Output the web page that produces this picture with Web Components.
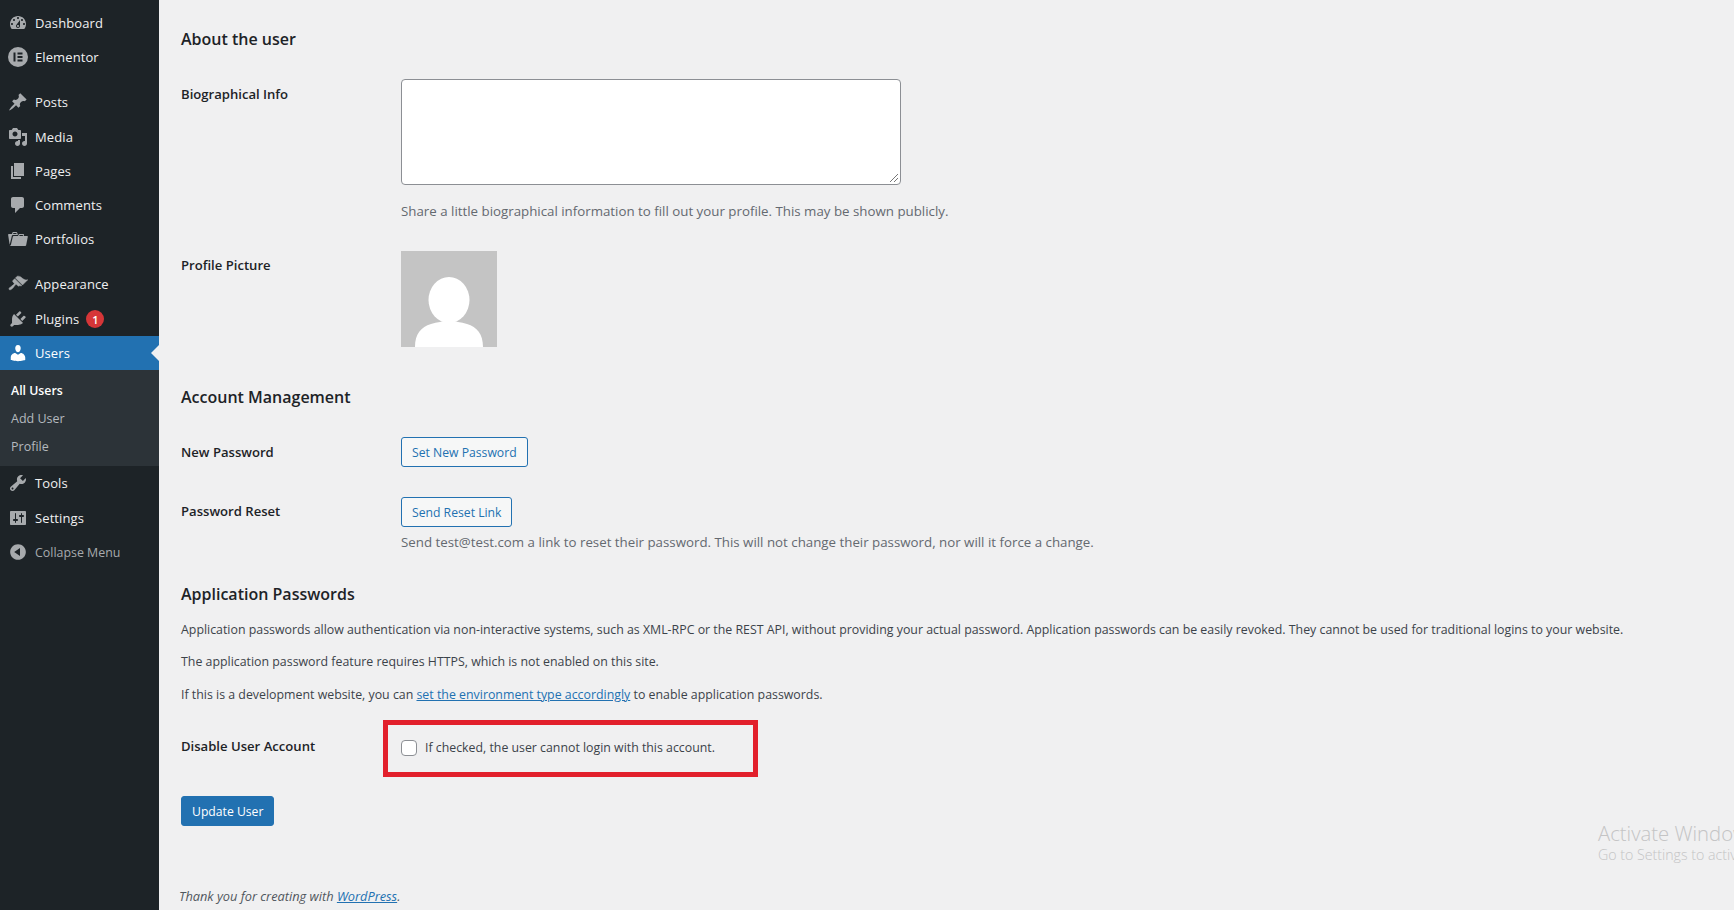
<!DOCTYPE html>
<html lang="en">
<head>
<meta charset="utf-8">
<title>Edit User</title>
<style>
html,body{margin:0;height:100%;overflow:hidden;background:#f0f0f1}
body{display:flex;font-family:"Open Sans","Noto Sans","Liberation Sans",sans-serif;font-size:13px;color:#3c434a}
</style>
</head>
<body>
<wp-sidebar>
  <wp-menu-item icon="dashboard">Dashboard</wp-menu-item>
  <wp-menu-item icon="elementor">Elementor</wp-menu-item>
  <wp-menu-gap></wp-menu-gap>
  <wp-menu-item icon="post">Posts</wp-menu-item>
  <wp-menu-item icon="media" style="margin-top:1px">Media</wp-menu-item>
  <wp-menu-item icon="page">Pages</wp-menu-item>
  <wp-menu-item icon="comments">Comments</wp-menu-item>
  <wp-menu-item icon="portfolio">Portfolios</wp-menu-item>
  <wp-menu-gap></wp-menu-gap>
  <wp-menu-item icon="appearance">Appearance</wp-menu-item>
  <wp-menu-item icon="plugins" badge="1" style="margin-top:1px">Plugins</wp-menu-item>
  <wp-menu-item icon="users" active>Users</wp-menu-item>
  <wp-submenu>
    <wp-sub-item current>All Users</wp-sub-item>
    <wp-sub-item>Add User</wp-sub-item>
    <wp-sub-item>Profile</wp-sub-item>
  </wp-submenu>
  <wp-menu-item icon="tools">Tools</wp-menu-item>
  <wp-menu-item icon="settings" style="margin-top:1px">Settings</wp-menu-item>
  <wp-menu-item icon="collapse" muted>Collapse Menu</wp-menu-item>
</wp-sidebar>
<wp-main></wp-main>

<script>
const ICONS = {
  dashboard:'M3.76 16h12.48c1.1-1.37 1.76-3.11 1.76-5 0-4.42-3.58-8-8-8s-8 3.58-8 8c0 1.89.66 3.63 1.76 5zM10 4c.55 0 1 .45 1 1s-.45 1-1 1-1-.45-1-1 .45-1 1-1zM6 6c.55 0 1 .45 1 1s-.45 1-1 1-1-.45-1-1 .45-1 1-1zm8 0c.55 0 1 .45 1 1s-.45 1-1 1-1-.45-1-1 .45-1 1-1zm-5.37 5.55L12 7v6c0 1.1-.9 2-2 2s-2-.9-2-2c0-.57.24-1.08.63-1.45zM4 10c.55 0 1 .45 1 1s-.45 1-1 1-1-.45-1-1 .45-1 1-1zm12 0c.55 0 1 .45 1 1s-.45 1-1 1-1-.45-1-1 .45-1 1-1zm-5 3c0-.55-.45-1-1-1s-1 .45-1 1 .45 1 1 1 1-.45 1-1z',
  elementor:'M10 0a10 10 0 1 0 0 20a10 10 0 0 0 0-20zM5.5 5.5h2v9h-2zM9.5 5.5h5v1.9h-5zM9.5 9h5v1.9h-5zM9.5 12.6h5v1.9h-5z',
  post:'M10.44 3.02l1.82-1.82 6.36 6.35-1.83 1.82c-1.05-.68-2.48-.57-3.41.36l-.75.75c-.92.93-1.04 2.35-.35 3.41l-1.83 1.82-2.41-2.41-2.8 2.79c-.42.42-3.38 2.71-3.8 2.29s1.86-3.39 2.28-3.81l2.79-2.79L4.1 9.36l1.83-1.82c1.05.69 2.48.57 3.4-.36l.75-.75c.93-.92 1.05-2.35.36-3.41z',
  media:'M13 11V4c0-.55-.45-1-1-1h-1.67L9 1H5L3.67 3H2c-.55 0-1 .45-1 1v7c0 .55.45 1 1 1h10c.55 0 1-.45 1-1zM7 4.5c1.38 0 2.5 1.12 2.5 2.5S8.38 9.5 7 9.5 4.5 8.38 4.5 7 5.62 4.5 7 4.5zM14 6h5v10.5c0 1.38-1.12 2.5-2.5 2.5S14 17.88 14 16.5s1.12-2.5 2.5-2.5c.17 0 .34.02.5.05V9h-3V6zm-4 8.05V13h2v3.5c0 1.38-1.12 2.5-2.5 2.5S7 17.88 7 16.5 8.12 14 9.5 14c.17 0 .34.02.5.05z',
  page:'M6 15V2h10v13H6zm-1 1h8v2H3V5h2v11z',
  comments:'M5 2h9c1.1 0 2 .9 2 2v7c0 1.1-.9 2-2 2h-2l-5 5v-5H5c-1.1 0-2-.9-2-2V4c0-1.1.9-2 2-2z',
  portfolio:'M4 5H.78c-.37 0-.74.32-.69.84l1.56 9.99S3.5 8.47 3.86 6.7c.11-.53.61-.7.98-.7H10s-.7-2.08-.77-2.31C9.11 3.25 8.89 3 8.45 3H5.14c-.36 0-.7.23-.8.64C4.26 3.95 4 5 4 5zm4.88 0h-4s.42-1 .87-1h2.13c.48 0 1 1 1 1zM2.67 16.25c-.31.47-.76.75-1.26.75h15.73c.54 0 .92-.31 1.03-.83.44-2.19 1.68-8.44 1.68-8.44.07-.5-.3-.73-.62-.73H16V5.53c0-.16-.26-.53-.66-.53h-3.76c-.52 0-.87.58-.87.58L10 7H5.59c-.32 0-.63.19-.69.5 0 0-1.59 6.7-1.72 7.33-.07.37-.22.99-.51 1.42zM15.38 7H11s.58-1 1.13-1h2.29c.71 0 .96 1 .96 1z',
  appearance:'M14.48 11.06L7.41 3.99l1.5-1.5c.5-.56 2.3-.47 3.51.32 1.21.8 1.43 1.28 2.91 2.1 1.18.64 2.45 1.26 4.45.85zm-.71.71L6.7 4.7 4.93 6.47c-.39.39-.39 1.02 0 1.41l1.06 1.06c.39.39.39 1.03 0 1.42-.6.6-1.43 1.11-2.21 1.69-.35.26-.7.53-1.01.84C1.43 13.23.4 14.77 1.2 15.58s2.35-.22 3.69-1.57c.3-.3.58-.66.84-1.01.58-.78 1.09-1.61 1.69-2.21.39-.39 1.02-.39 1.41 0l1.06 1.06c.39.39 1.02.39 1.41 0z',
  plugins:'M13.11 4.36L9.87 7.6 8 5.73l3.24-3.24c.35-.34 1.05-.2 1.56.32.52.51.66 1.21.31 1.55zm-8 1.77l.91-1.12 9.01 9.01-1.19.84c-.71.71-2.63 1.16-3.82 1.16H6.14L4.9 17.26c-.59.59-1.54.59-2.12 0-.59-.58-.59-1.53 0-2.12l1.24-1.24v-3.88c0-1.13.4-3.19 1.09-3.89zm7.26 3.97l3.24-3.24c.34-.35 1.04-.21 1.55.31.52.51.66 1.21.31 1.55l-3.24 3.25z',
  users:'M10 9.25c-2.27 0-2.73-3.44-2.73-3.44C7 4.02 7.82 2 9.97 2c2.16 0 2.98 2.02 2.71 3.81 0 0-.41 3.44-2.68 3.44zm0 2.57L12.72 10c2.39 0 4.52 2.33 4.52 4.53v2.49s-3.65 1.13-7.24 1.13c-3.65 0-7.24-1.13-7.24-1.13v-2.49c0-2.25 1.94-4.53 4.47-4.53z',
  tools:'M16.68 9.77c-1.34 1.34-3.3 1.67-4.95.99l-5.41 6.52c-.99.99-2.59.99-3.58 0s-.99-2.59 0-3.57l6.52-5.42c-.68-1.65-.35-3.61.99-4.95 1.28-1.28 3.12-1.62 4.72-1.06l-2.89 2.89 2.82 2.82 2.86-2.87c.53 1.58.18 3.39-1.08 4.67zM3.81 16.21c.4.39 1.04.39 1.43 0 .4-.4.4-1.04 0-1.43-.39-.4-1.03-.4-1.43 0-.39.39-.39 1.03 0 1.43z',
  settings:'M18 16V4c0-.55-.45-1-1-1H3c-.55 0-1 .45-1 1v12c0 .55.45 1 1 1h14c.55 0 1-.45 1-1zM8 11h1c.55 0 1 .45 1 1s-.45 1-1 1H8v1.5c0 .28-.22.5-.5.5s-.5-.22-.5-.5V13H6c-.55 0-1-.45-1-1s.45-1 1-1h1V5.5c0-.28.22-.5.5-.5s.5.22.5.5V11zm5-2h-1c-.55 0-1-.45-1-1s.45-1 1-1h1V5.5c0-.28.22-.5.5-.5s.5.22.5.5V7h1c.55 0 1 .45 1 1s-.45 1-1 1h-1v5.5c0 .28-.22.5-.5.5s-.5-.22-.5-.5V9z',
  collapse:'M10 2.16c4.33 0 7.84 3.51 7.84 7.84s-3.51 7.84-7.84 7.84S2.16 14.33 2.16 10 5.71 2.16 10 2.16zm2 11.72V6.12L6.18 9.97z'
};

function def(name, css, html){
  customElements.define(name, class extends HTMLElement{
    constructor(){
      super();
      this.attachShadow({mode:'open'});
    }
    connectedCallback(){
      if(!this.shadowRoot.innerHTML)
        this.shadowRoot.innerHTML = `<style>${css}</style>${typeof html==='function'?html(this):html}`;
    }
  });
}

def('wp-sidebar',
  `:host{display:flex;flex-direction:column;box-sizing:border-box;flex:none;width:159px;height:100vh;padding-top:6px;background:#1d2327;color:#f0f0f1}`,
  `<slot></slot>`);

def('wp-menu-gap', `:host{display:block;height:11px}`, `<span></span>`);

def('wp-menu-item',
  `:host{display:flex;position:relative;flex:none;align-items:center;height:34px;color:#f0f0f1;font-size:13px;letter-spacing:.1px}
   :host([active]){background:#2271b1;color:#fff}
   :host([muted]){color:#a7aaad;font-size:12.4px;letter-spacing:0}
   svg{flex:none;width:20px;height:20px;margin:0 7px 0 8px;fill:#a7aaad}
   :host([icon=appearance]) svg{stroke:#a7aaad;stroke-width:.5}
   :host([active]) svg{fill:#fff}
   .badge{display:flex;align-items:center;justify-content:center;width:18px;height:18px;margin-left:7px;border-radius:50%;background:#d63638;color:#fff;font-size:11px;font-weight:600;letter-spacing:0}
   .arrow{position:absolute;right:0;top:9px;border:8px solid transparent;border-right-color:#f0f0f1;border-left-width:0}`,
  el=>{
    const ic=el.getAttribute('icon');
    const b=el.getAttribute('badge');
    return `<svg viewBox="0 0 20 20" aria-hidden="true"><path fill-rule="evenodd" d="${ICONS[ic]}"/></svg><slot></slot>`+
      (b?`<span class="badge">${b}</span>`:'')+
      (el.hasAttribute('active')?`<span class="arrow"></span>`:'');
  });

def('wp-submenu',
  `:host{display:flex;flex-direction:column;flex:none;box-sizing:border-box;height:96px;padding:6px 0;background:#2c3338}`,
  `<slot></slot>`);

def('wp-sub-item',
  `:host{display:flex;align-items:center;height:28px;padding-left:11px;font-size:12.5px;color:#b4b9be}
   :host([current]){color:#fff;font-weight:600;font-size:12.3px}`,
  `<slot></slot>`);

def('wp-heading',
  `:host{display:block;height:22px;line-height:22px;font-size:16px;font-weight:600;color:#1d2327}`,
  `<slot></slot>`);

def('wp-row',
  `:host{display:grid;grid-template-columns:220px 1fr;align-items:start}
   .label{font-size:13.1px;font-weight:600;line-height:20px;color:#1d2327}`,
  `<div class="label" part="label"><slot name="label"></slot></div><div><slot></slot></div>`);

def('wp-desc',
  `:host{display:block;line-height:20px;font-size:13.3px;color:#646970}`,
  `<slot></slot>`);

def('wp-para',
  `:host{display:block;line-height:20px;font-size:12.36px;color:#3c434a}`,
  `<slot></slot>`);

def('wp-button',
  `:host{display:inline-flex;align-items:center;box-sizing:border-box;height:30px;padding:0 10px;border:1px solid #2271b1;border-radius:3px;background:#f6f7f7;color:#2271b1;font-size:12.2px}
   :host([primary]){background:#2271b1;color:#fff}`,
  `<slot></slot>`);

def('wp-avatar',
  `:host{display:block;width:96px;height:96px}
   svg{display:block}`,
  `<svg width="96" height="96" viewBox="0 0 96 96" role="img" aria-label="Profile picture"><rect width="96" height="96" fill="#c4c4c4"/><ellipse cx="48" cy="49" rx="20.5" ry="23" fill="#fff"/><path d="M14 96c0-13 6-20 16-23 6-2 12-2 18-5 6 3 12 3 18 5 10 3 16 10 16 23z" fill="#fff"/></svg>`);

def('wp-checkbox',
  `:host{display:inline-flex;align-items:center;font-size:12.34px;color:#3c434a}
   i{display:block;box-sizing:border-box;width:16px;height:16px;margin-right:8px;border:1px solid #8c8f94;border-radius:4px;background:#fff}`,
  `<i role="checkbox" aria-checked="false"></i><slot></slot>`);

def('wp-highlight',
  `:host{position:absolute;box-sizing:border-box;left:-18px;top:1px;width:375px;height:57px;border:5px solid #e2202c;pointer-events:none}`,
  `<span></span>`);

def('wp-watermark',
  `:host{position:absolute;left:1598px;top:820px;white-space:nowrap;color:#c4c4c5;font-weight:300}
   .big{font-size:20.3px;line-height:26px}
   .small{font-size:14.2px;line-height:18px}`,
  `<div class="big">Activate Windows</div><div class="small">Go to Settings to activate Windows.</div>`);

def('wp-main',
  `:host{display:block;flex:1;min-width:0;box-sizing:border-box;height:100vh;padding:28px 0 0 22px;overflow:hidden}
   .field{position:relative;height:58px;box-sizing:border-box;padding-top:20px}
   wp-row::part(label){padding-top:5px}
   #pic::part(label){padding-top:4px}
   #reset::part(label){padding-top:4px}
   #disable::part(label){padding-top:17px}
   footer{margin:60px 0 0 -2px;line-height:20px;font-size:12.8px;font-style:italic;color:#50575e}
   a{color:#2271b1;text-decoration:underline}
   .ta{box-sizing:border-box;width:500px;height:106px;border:1px solid #8c8f94;border-radius:4px;background:#fff;position:relative}
   .ta svg{position:absolute;right:1px;bottom:1px}`,
  `<wp-heading>About the user</wp-heading>
   <wp-row id="bio" style="margin-top:29px"><span slot="label">Biographical Info</span>
     <div class="ta"><svg width="10" height="10" viewBox="0 0 10 10"><path d="M1 9L9 1M5 9L9 5" stroke="#777" fill="none"/></svg></div>
     <wp-desc style="margin-top:16px">Share a little biographical information to fill out your profile. This may be shown publicly.</wp-desc>
   </wp-row>
   <wp-row id="pic" style="margin-top:30px"><span slot="label">Profile Picture</span><wp-avatar></wp-avatar></wp-row>
   <wp-heading style="margin-top:39px">Account Management</wp-heading>
   <wp-row id="newpw" style="margin-top:29px"><span slot="label">New Password</span><wp-button>Set New Password</wp-button></wp-row>
   <wp-row id="reset" style="margin-top:30px"><span slot="label">Password Reset</span>
     <wp-button>Send Reset Link</wp-button>
     <wp-desc style="margin-top:5px">Send test@test.com a link to reset their password. This will not change their password, nor will it force a change.</wp-desc>
   </wp-row>
   <wp-heading style="margin-top:31px">Application Passwords</wp-heading>
   <wp-para style="margin-top:15px">Application passwords allow authentication via non-interactive systems, such as XML-RPC or the REST API, without providing your actual password. Application passwords can be easily revoked. They cannot be used for traditional logins to your website.</wp-para>
   <wp-para style="margin-top:12px">The application password feature requires HTTPS, which is not enabled on this site.</wp-para>
   <wp-para style="margin-top:13px">If this is a development website, you can <a href="#">set the environment type accordingly</a> to enable application passwords.</wp-para>
   <wp-row id="disable" style="margin-top:14px"><span slot="label">Disable User Account</span>
     <div class="field"><wp-checkbox>If checked, the user cannot login with this account.</wp-checkbox><wp-highlight></wp-highlight></div>
   </wp-row>
   <wp-button primary style="margin-top:19px">Update User</wp-button>
   <footer>Thank you for creating with <a href="#">WordPress</a>.</footer>`);
</script>
<wp-watermark></wp-watermark>
</body>
</html>
